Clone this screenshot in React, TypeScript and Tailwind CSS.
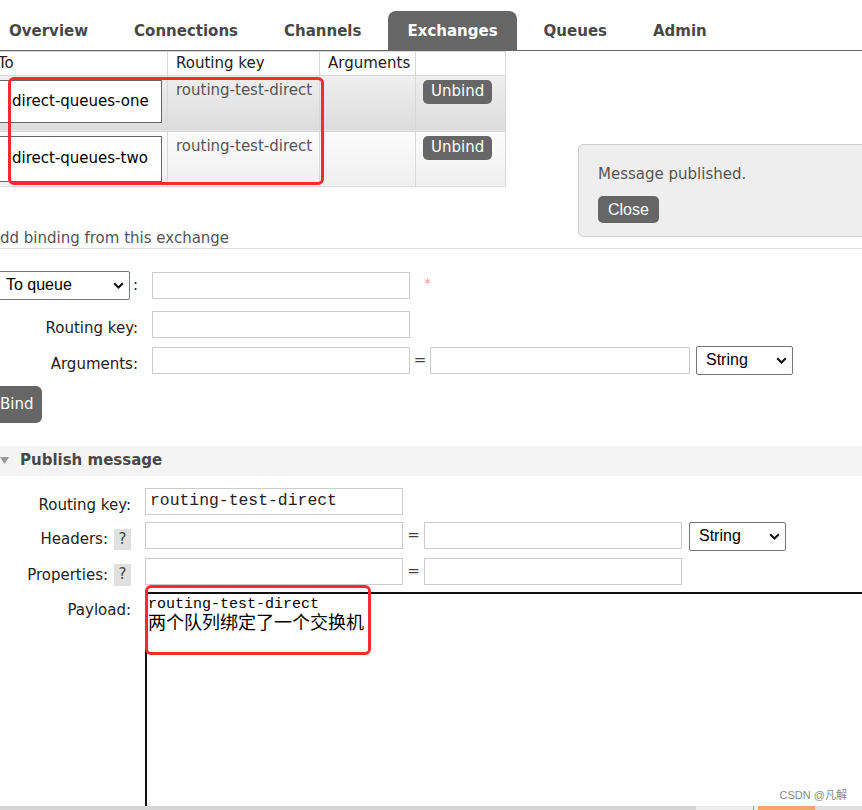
import React from 'react';

const tabs = ['Overview', 'Connections', 'Channels', 'Exchanges', 'Queues', 'Admin'];

const bindings = [
  { queue: 'direct-queues-one', key: 'routing-test-direct', cell: 'bg-linear-to-b from-[#efefef] to-[#dcdcdc]', box: 'h-[43px]' },
  { queue: 'direct-queues-two', key: 'routing-test-direct', cell: 'bg-linear-to-b from-[#fcfcfc] to-[#efefef]', box: 'h-[46px]' },
];

// 小さな下向き矢印
function Chevron() {
  return (
    <svg width="11" height="7" viewBox="0 0 11 7" className="shrink-0">
      <path d="M1.2 1.2 L5.5 5.5 L9.8 1.2" fill="none" stroke="#111" strokeWidth="2" />
    </svg>
  );
}

function FakeSelect({ label, className }: { label: string; className: string }) {
  return (
    <div
      className={`flex items-center justify-between h-[29px] border border-[#767676] rounded-[2px] bg-white pl-[9px] pr-[5px] font-['Liberation_Sans',sans-serif] text-[16px] text-black ${className}`}
    >
      <span>{label}</span>
      <Chevron />
    </div>
  );
}

function TextBox({ className, value }: { className: string; value?: string }) {
  return (
    <div
      className={`h-[27px] border border-[#ccc] bg-white pl-[4px] flex items-center font-['Liberation_Mono',monospace] text-[16.4px] text-[#222] ${className}`}
    >
      {value}
    </div>
  );
}

function Help() {
  return (
    <span className="ml-[6px] mt-[7px] w-[17px] h-[21px] bg-[#e0e0e0] text-[#444] flex items-center justify-center text-[15px]">
      ?
    </span>
  );
}

export default function App() {
  return (
    <div className="w-[862px] h-[810px] flex flex-col overflow-hidden bg-white font-['DejaVu_Sans',sans-serif] text-[15px] text-[#222]">
      <div className="relative flex-1 min-h-0 overflow-hidden">
        {/* タブ */}
        <nav className="h-[51px] flex items-end gap-[8px] border-b border-[#666] pl-0">
          {tabs.map((t, i) => (
            <div
              key={t}
              className={`h-[39px] px-[19px] pt-[2px] flex items-center rounded-t-[8px] font-bold ${
                i === 0 ? '-ml-[10px]' : ''
              } ${t === 'Exchanges' ? 'bg-[#666] text-white' : 'text-[#484848]'}`}
            >
              {t}
            </div>
          ))}
        </nav>

        {/* バインディング一覧 */}
        <table className="table-fixed border-collapse -ml-[11px] w-[516px]">
          <colgroup>
            <col className="w-[178px]" />
            <col className="w-[152px]" />
            <col className="w-[96px]" />
            <col className="w-[90px]" />
          </colgroup>
          <thead>
            <tr>
              <th className="h-[23px] px-[8px] text-left font-normal border border-[#d8d8d8] text-[#222]">To</th>
              <th className="h-[23px] px-[8px] text-left font-normal border border-[#d8d8d8] text-[#222]">Routing key</th>
              <th className="h-[23px] px-[8px] text-left font-normal border border-[#d8d8d8] text-[#222]">Arguments</th>
              <th className="h-[23px] px-[8px] border border-[#d8d8d8]"></th>
            </tr>
          </thead>
          <tbody>
            {bindings.map((b, i) => (
              <tr key={i} className={i === 0 ? 'h-[56px]' : 'h-[55px]'}>
                <td className={`align-top pt-[4px] pl-[8px] pr-[5px] border border-[#d8d8d8] ${b.cell}`}>
                  <div className={`${b.box} border border-[#666] bg-white pl-[13px] flex items-center text-black`}>
                    {b.queue}
                  </div>
                </td>
                <td className={`align-top pt-[3px] pl-[8px] pr-0 whitespace-nowrap overflow-hidden border border-[#d8d8d8] text-[#555] ${b.cell}`}>
                  {b.key}
                </td>
                <td className={`border border-[#d8d8d8] ${b.cell}`}></td>
                <td className={`align-top pt-[4px] px-[7px] border border-[#d8d8d8] ${b.cell}`}>
                  <span className="inline-flex h-[24px] px-[8px] items-center rounded-[5px] bg-[#666] text-white">Unbind</span>
                </td>
              </tr>
            ))}
          </tbody>
        </table>

        {/* バインディング追加 */}
        <h3 className="mt-[40px] -ml-[10px] h-[22px] leading-[22px] border-b border-[#ddd] text-[#555] font-normal whitespace-nowrap">
          Add binding from this exchange
        </h3>

        <div className="mt-[22px] flex items-center h-[29px]">
          <div className="w-[138px] flex items-center justify-end">
            <FakeSelect label="To queue" className="w-[134px] shrink-0" />
            <span className="ml-[3px]">:</span>
          </div>
          <TextBox className="ml-[14px] w-[258px]" />
          <span className="ml-[14px] text-[#f99] text-[14px] -mt-[4px]">*</span>
        </div>

        <div className="mt-[11px] flex items-start h-[27px]">
          <div className="w-[138px] h-[27px] text-right leading-[27px] pt-[4px]">Routing key:</div>
          <TextBox className="ml-[14px] w-[258px]" />
        </div>

        <div className="mt-[8px] flex items-start h-[29px]">
          <div className="w-[138px] h-[29px] text-right leading-[27px] pt-[5px]">Arguments:</div>
          <TextBox className="ml-[14px] mt-[1px] w-[258px]" />
          <span className="w-[20px] mt-[1px] leading-[27px] text-center text-[#444]">=</span>
          <TextBox className="w-[260px] mt-[1px]" />
          <FakeSelect label="String" className="ml-[6px] w-[97px]" />
        </div>

        <div className="mt-[11px] -ml-[10px] inline-flex h-[37px] pl-[10px] pr-[8px] items-center rounded-[6px] bg-[#666] text-white">
          Bind
        </div>

        {/* メッセージ発行 */}
        <div className="mt-[23px] h-[30px] bg-[#f4f4f4] flex items-center">
          <svg width="9" height="7" viewBox="0 0 9 7" className="shrink-0">
            <path d="M0 0 H9 L4.5 7 Z" fill="#999" />
          </svg>
          <span className="ml-[11px] font-bold text-[#484848]">Publish message</span>
        </div>

        <div className="mt-[12px] flex items-start h-[27px]">
          <div className="w-[131px] h-[27px] text-right leading-[27px] pt-[4px]">Routing key:</div>
          <TextBox className="ml-[14px] w-[258px]" value="routing-test-direct" />
        </div>

        <div className="mt-[7px] flex items-start h-[29px]">
          <div className="w-[131px] h-[29px] flex justify-end">
            <span className="leading-[27px] pt-[4px]">Headers:</span>
            <Help />
          </div>
          <TextBox className="ml-[14px] w-[258px]" />
          <span className="w-[21px] leading-[27px] text-center text-[#444]">=</span>
          <TextBox className="w-[258px]" />
          <FakeSelect label="String" className="ml-[7px] w-[97px]" />
        </div>

        <div className="mt-[7px] flex items-start h-[27px]">
          <div className="w-[131px] h-[27px] flex justify-end">
            <span className="leading-[27px] pt-[4px]">Properties:</span>
            <span className="ml-[6px] mt-[6px] w-[17px] h-[22px] shrink-0 bg-[#e0e0e0] text-[#444] flex items-center justify-center text-[15px]">
              ?
            </span>
          </div>
          <TextBox className="ml-[14px] w-[258px]" />
          <span className="w-[21px] leading-[27px] text-center text-[#444]">=</span>
          <TextBox className="w-[258px]" />
        </div>

        <div className="mt-[7px] flex items-start">
          <div className="w-[131px] text-right pt-[8px] leading-[20px]">Payload:</div>
          <div className="ml-[14px] flex-1 h-[400px] border-t-2 border-l-2 border-[#111] pl-[1px] pt-[2px] text-black leading-[17px]">
            <div className="font-['Liberation_Mono',monospace] text-[15px]">routing-test-direct</div>
            <div className="font-['Noto_Sans_CJK_SC',sans-serif] text-[18px]">两个队列绑定了一个交换机</div>
          </div>
        </div>

        {/* 通知 */}
        <div className="absolute left-[578px] top-[144px] w-[300px] h-[93px] rounded-[5px] border border-[#ccc] bg-[#eee] pl-[19px] pt-[19px]">
          <div className="leading-[20px] text-[#555]">Message published.</div>
          <div className="mt-[12px] inline-flex h-[27px] px-[10px] items-center rounded-[5px] bg-[#666] text-white font-['Liberation_Sans',sans-serif] text-[16px]">
            Close
          </div>
        </div>

        {/* 赤い注釈枠 */}
        <div className="absolute left-[8px] top-[77px] w-[316px] h-[108px] border-[3px] border-[#f52a2a] rounded-[6px]" />
        <div className="absolute left-[145px] top-[585px] w-[226px] h-[70px] border-[3px] border-[#f52a2a] rounded-[6px]" />

        <div className="absolute right-[15px] bottom-[5px] leading-[12px] text-[11px] text-[#8a8a8a] font-['Liberation_Sans','Noto_Sans_CJK_SC',sans-serif]">
          CSDN @凡解
        </div>
      </div>

      {/* 下部バー */}
      <div className="h-[4px] flex shrink-0">
        <div className="w-[696px] bg-[#d6d6d6]" />
        <div className="w-[57px] bg-[#eeeeee]" />
        <div className="w-[1px] bg-[#999]" />
        <div className="w-[4px] bg-[#eeeeee]" />
        <div className="w-[57px] bg-[#f5a66c]" />
        <div className="flex-1 bg-[#e0e0e0]" />
      </div>
    </div>
  );
}
